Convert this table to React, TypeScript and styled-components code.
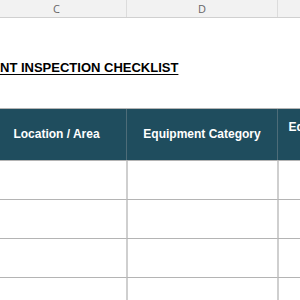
import React from "react";
import styled, { createGlobalStyle } from "styled-components";

const Global = createGlobalStyle`
  html, body { margin: 0; padding: 0; background: #ffffff; }
  body { width: 300px; height: 300px; overflow: hidden; font-family: "Liberation Sans", Arial, sans-serif; }
`;

const Sheet = styled.div`
  width: 300px;
  height: 300px;
  overflow: hidden;
  background: #ffffff;
`;

const Inner = styled.div`
  margin-left: -13px;
  width: 420px;
`;

const cols = "140px 151px 84px";

const ColHeaderBar = styled.div`
  display: grid;
  grid-template-columns: ${cols};
  height: 17px;
  background: #f2f2f2;
  border-bottom: 1px solid #d0d0d0;
`;

const ColLetter = styled.div`
  display: flex;
  align-items: center;
  justify-content: center;
  font-family: "Open Sans", "Liberation Sans", sans-serif;
  font-size: 11px;
  color: #666666;
  border-right: 1px solid #dcdcdc;
`;

const TitleRow = styled.div`
  height: 90px;
  padding-top: 40px;
  box-sizing: border-box;
  padding-left: 13px;
`;

const Title = styled.span`
  font-family: "Liberation Sans", Arial, sans-serif;
  font-weight: bold;
  font-size: 13px;
  color: #000000;
  text-decoration: underline;
  text-underline-offset: 2px;
`;

const Table = styled.div`
  display: grid;
  grid-template-columns: ${cols};
  border-top: 1px solid #b4b4b4;
`;

const HeadCell = styled.div`
  height: 51px;
  background: #1f4d5e;
  color: #ffffff;
  font-family: "Liberation Sans", Arial, sans-serif;
  font-weight: bold;
  font-size: 12px;
  line-height: 14px;
  display: flex;
  align-items: center;
  justify-content: center;
  text-align: center;
  white-space: pre-line;
  border-right: 1px solid #4d6c78;
  box-sizing: border-box;
  padding-bottom: 2px;
`;

const Cell = styled.div`
  height: 39px;
  box-sizing: border-box;
  border-top: 1px solid #b4b4b4;
  border-right: 2px solid #cfcfcf;
  margin-right: -1px;
`;

const letters = ["C", "D", ""];
const headers = ["Location / Area", "Equipment Category", "Equipment\nNo."];

export default function App() {
  const rows = [0, 1, 2, 3];
  return (
    <Sheet>
      <Global />
      <Inner>
        <ColHeaderBar>
          {letters.map((l, i) => (
            <ColLetter key={i}>{l}</ColLetter>
          ))}
        </ColHeaderBar>
        <TitleRow>
          <Title>NT INSPECTION CHECKLIST</Title>
        </TitleRow>
        <Table>
          {headers.map((h) => (
            <HeadCell key={h}>{h}</HeadCell>
          ))}
          {rows.map((r) =>
            headers.map((h) => <Cell key={`${r}-${h}`} />)
          )}
        </Table>
      </Inner>
    </Sheet>
  );
}
